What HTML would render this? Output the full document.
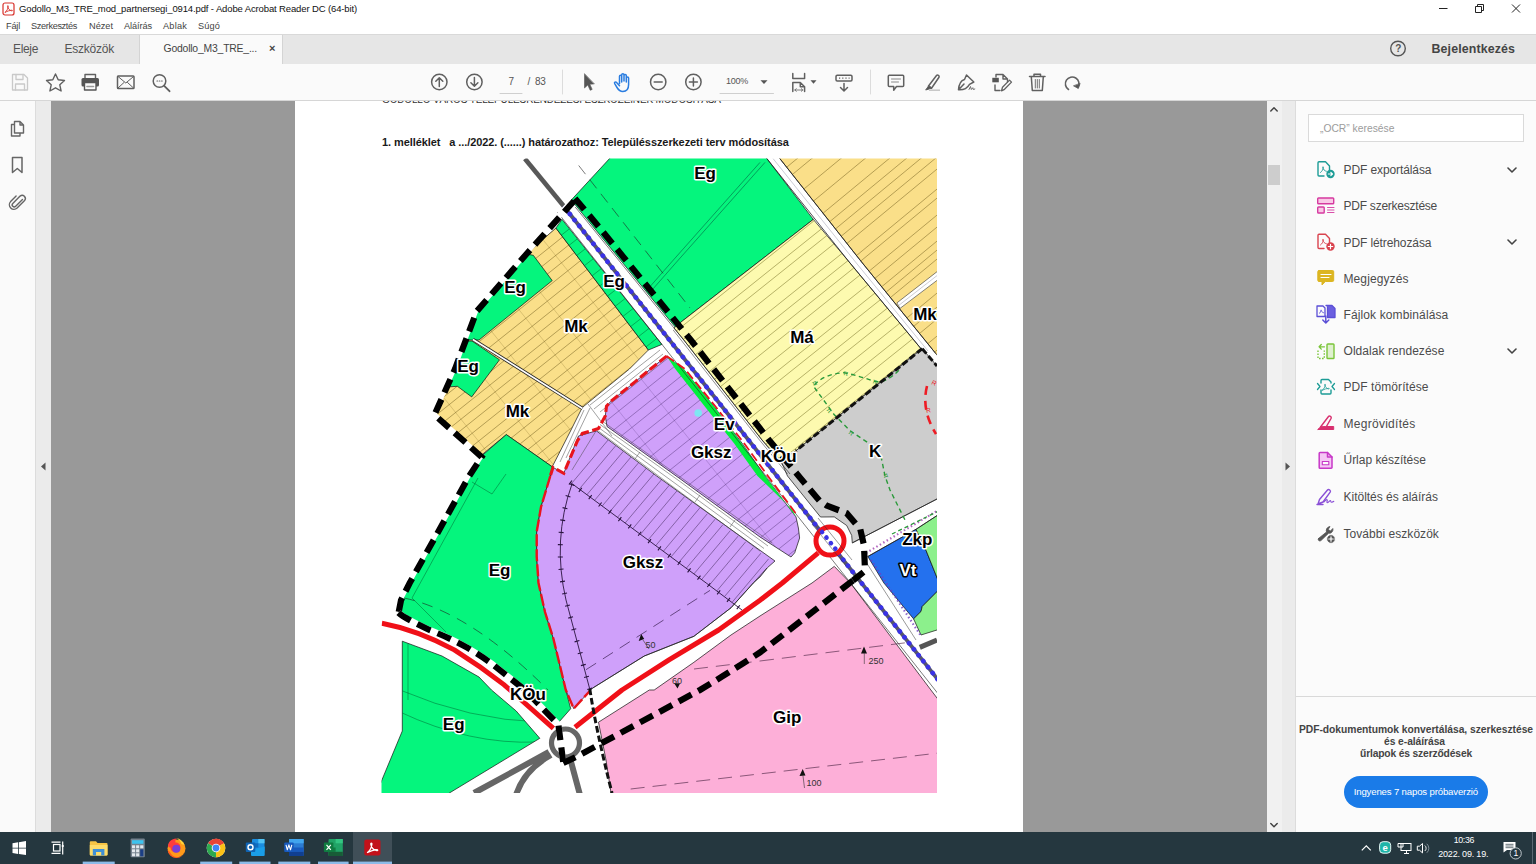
<!DOCTYPE html>
<html lang="hu">
<head>
<meta charset="utf-8">
<title>Godollo_M3_TRE_mod_partnersegi_0914.pdf - Adobe Acrobat Reader DC (64-bit)</title>
<style>
*{box-sizing:border-box;margin:0;padding:0}
html,body{width:1536px;height:864px;overflow:hidden;background:#fff;font-family:"Liberation Sans",sans-serif;color:#222}
.abs{position:absolute}
.t{position:absolute;white-space:nowrap;line-height:1}
#titlebar{left:0;top:0;width:1536px;height:19px;background:#fff}
#menubar{left:0;top:19px;width:1536px;height:15px;background:#fff}
#tabbar{left:0;top:34px;width:1536px;height:30px;background:#e6e6e6;border-top:1px solid #d9d9d9}
#tab{left:139px;top:35px;width:144px;height:29px;background:#fafafa;border-left:1px solid #d4d4d4;border-right:1px solid #d4d4d4}
#toolbar{left:0;top:64px;width:1536px;height:37px;background:#fafafa;border-bottom:1px solid #d6d6d6}
#rail{left:0;top:101px;width:35px;height:731px;background:#fafafa}
#railstrip{left:35px;top:101px;width:15.5px;height:731px;background:#ebebeb;border-left:1px solid #dcdcdc}
#docbg{left:50.5px;top:101px;width:1216.5px;height:731px;background:#999}
#page{left:295px;top:101px;width:728px;height:731px;background:#fff}
#vscroll{left:1267px;top:101px;width:14.5px;height:731px;background:#f1f1f1}
#vthumb{left:1268px;top:165px;width:12px;height:20px;background:#cdcdcd}
#rstrip{left:1281.5px;top:101px;width:14.5px;height:731px;background:#ebebeb;border-right:1px solid #dcdcdc}
#rpanel{left:1296px;top:101px;width:240px;height:731px;background:#fbfbfb}
#taskbar{left:0;top:832px;width:1536px;height:32px;background:#25373f}
.menu{font-size:9.2px;color:#444;top:22px}
.tool{font-size:12px;color:#4b4b4b}
.promo{font-size:10.3px;font-weight:bold;color:#444}
</style>
</head>
<body>
<div id="titlebar" class="abs"></div>
<div id="menubar" class="abs"></div>
<div id="tabbar" class="abs"></div>
<div id="tab" class="abs"></div>
<div id="toolbar" class="abs"></div>
<div id="rail" class="abs"></div>
<div id="railstrip" class="abs"></div>
<div id="docbg" class="abs"></div>
<div id="page" class="abs"></div>
<div id="vscroll" class="abs"></div>
<div id="vthumb" class="abs"></div>
<div id="rstrip" class="abs"></div>
<div id="rpanel" class="abs"></div>
<div id="taskbar" class="abs"></div>

<!-- TITLE + MENUS -->
<span class="t" id="title" style="letter-spacing:-0.128px;;;;left:19px;top:4px;font-size:9.5px;color:#111">Godollo_M3_TRE_mod_partnersegi_0914.pdf - Adobe Acrobat Reader DC (64-bit)</span>
<span class="t menu" id="m1" style="letter-spacing:-0.203px;;;;left:6px">Fájl</span>
<span class="t menu" id="m2" style="letter-spacing:-0.368px;;;;left:31px">Szerkesztés</span>
<span class="t menu" id="m3" style="letter-spacing:-0.003px;;;;left:89px">Nézet</span>
<span class="t menu" id="m4" style="letter-spacing:-0.087px;;;;left:124px">Aláírás</span>
<span class="t menu" id="m5" style="letter-spacing:0.203px;;;;left:163px">Ablak</span>
<span class="t menu" id="m6" style="letter-spacing:0.133px;;;;left:198px">Súgó</span>
<span class="t" id="tb1" style="letter-spacing:-0.338px;;;;left:13px;top:43px;font-size:12px;color:#555">Eleje</span>
<span class="t" id="tb2" style="letter-spacing:-0.232px;;;;left:64.5px;top:43px;font-size:12px;color:#555">Eszközök</span>
<span class="t" id="tb3" style="letter-spacing:-0.196px;;;;left:163.5px;top:44px;font-size:10.4px;color:#444">Godollo_M3_TRE_...</span>
<span class="t" id="tbx" style="left:269px;top:43px;font-size:11px;color:#444;font-weight:bold">×</span>
<span class="t" id="login" style="letter-spacing:0.118px;;;;left:1431.5px;top:43px;font-size:12.4px;color:#444;font-weight:bold">Bejelentkezés</span>

<!--CHROME-ICONS-START-->
<svg class="abs" style="left:0;top:0" width="1536" height="864" viewBox="0 0 1536 864" fill="none" stroke="#606060" stroke-width="1.5" stroke-linecap="round" stroke-linejoin="round">
<!-- app icon -->
<rect x="3" y="3" width="11" height="12" rx="2" fill="#fff" stroke="#d8302a" stroke-width="1.2"/>
<path d="M5.2 12.3c1.6-1.2 2.8-3.6 3.1-6 .1-.9-.9-.9-.8 0 .3 2.300 2.200 4.300 4.300 4.600.9.100.9-.8 0-.7-2.100.2-4.600 1-6.600 2.100z" stroke="#d8302a" stroke-width="0.9"/>
<!-- window controls -->
<g stroke="#222" stroke-width="1" stroke-linecap="butt">
<path d="M1439 8.500h8.500"/>
<path d="M1475.500 6.500h6v6h-6z M1477.500 6.500v-2h6v6h-2"/>
<path d="M1512 4.500l8 8 M1520 4.500l-8 8"/>
</g>
<!-- help -->
<circle cx="1398" cy="48.500" r="7.300" stroke="#555" stroke-width="1.400"/>
<!-- toolbar: save (disabled) -->
<g stroke="#c9c9c9" stroke-width="1.300">
<path d="M12.500 74.500h11.500l3.500 3.500v12h-15z"/><path d="M16 74.500v5h7v-5 M15.500 90v-6h9v6"/>
</g>
<!-- star -->
<path d="M55.500 74l2.700 5.800 6.300.7-4.700 4.300 1.300 6.200-5.600-3.200-5.600 3.200 1.300-6.200-4.700-4.300 6.300-.7z" stroke-width="1.400"/>
<!-- printer -->
<g>
<path d="M85 78v-3.500h10.500v3.500" stroke-width="1.400"/>
<rect x="81.500" y="78" width="17.500" height="8.500" rx="1.500" fill="#555" stroke="none"/>
<rect x="84.500" y="82.500" width="11.500" height="7.500" fill="#fafafa" stroke="#555" stroke-width="1.400"/>
<path d="M87 86.500h6.500" stroke="#999" stroke-width="1.600"/>
</g>
<!-- mail -->
<rect x="117.500" y="76" width="16.500" height="12.500" rx="0.800" stroke-width="1.500"/>
<path d="M118 76.500l7.800 6.500 7.800-6.500 M118 88l6-5.500 M133.500 88l-6-5.500" stroke-width="1"/>
<!-- search -->
<circle cx="159.500" cy="81" r="6.300" stroke-width="1.500"/><path d="M164.200 85.800l5.300 5.400" stroke-width="1.900"/>
<path d="M157 81h.6 M159.300 81h.6 M161.600 81h.6" stroke-width="1.200"/>
<!-- up/down -->
<circle cx="439.300" cy="82" r="7.700" stroke-width="1.500"/><path d="M439.300 86.500v-8.500 M435.800 81.200l3.500-3.500 3.500 3.500" stroke-width="1.500"/>
<circle cx="474.400" cy="82" r="7.700" stroke-width="1.500"/><path d="M474.400 77.500v8.500 M470.900 82.800l3.500 3.500 3.500-3.500" stroke-width="1.500"/>
<path d="M500 93.500h22" stroke="#cfcfcf" stroke-width="1"/>
<path d="M562.500 70v24 M870.500 70v24" stroke="#dcdcdc" stroke-width="1"/>
<!-- pointer -->
<path d="M584.500 74v14l3.300-3 2.400 5.300 2-.9-2.400-5.200 4.200-.3z" fill="#555" stroke="#555" stroke-width="0.600"/>
<!-- hand -->
<g stroke="#2b7de0" stroke-width="1.500">
<path d="M619.500 83.500v-7.200c0-1.500 2.200-1.500 2.200 0v5.700 M621.700 81v-6.200c0-1.500 2.300-1.500 2.300 0v6.200 M624 81v-5.500c0-1.500 2.300-1.500 2.300 0v6 M626.300 82v-4c0-1.500 2.300-1.500 2.300 0v6.500c0 4-2 7-5.800 7-3 0-4.300-1.500-5.800-4l-2.300-3.800c-.8-1.400.9-2.400 1.900-1.200l2.900 3.300"/>
</g>
<!-- zoom -/+ -->
<circle cx="658.200" cy="82" r="7.700"/><path d="M654.200 82h8"/>
<circle cx="693.400" cy="82" r="7.700"/><path d="M689.400 82h8 M693.400 78v8"/>
<path d="M720 93.500h53.500" stroke="#cfcfcf" stroke-width="1"/>
<path d="M760.500 80.300h7l-3.500 3.700z" fill="#555" stroke="none"/>
<!-- fit page -->
<path d="M792.800 73.500v5h11.800v-5 M792.800 91.500v-9h7.500l4.300 4.300v4.700 M800.300 82.500v4.300h4.300" stroke-width="1.500"/>
<path d="M794.800 90h8 M796.300 88.700l-1.500 1.300 1.500 1.300 M801.300 88.700l1.500 1.300-1.500 1.300" stroke-width="0.800"/>
<path d="M810.500 80.300h6l-3 3.500z" fill="#555" stroke="none"/>
<!-- scroll mode -->
<rect x="836" y="75.200" width="16" height="5.800" rx="1.200" stroke-width="1.500"/>
<path d="M839 78.100h1.200 M842.200 78.100h1.200 M845.400 78.100h1.200 M848.600 78.100h1" stroke-width="1.200" stroke-linecap="butt"/>
<path d="M844 83.500v7 M840.500 87.500l3.500 3.500 3.500-3.500" stroke-width="1.500"/>
<!-- comment -->
<path d="M889.300 75.200h13.400a1 1 0 0 1 1 1v9.300a1 1 0 0 1-1 1h-6.200l-2.800 3.700v-3.700h-4.400a1 1 0 0 1-1-1v-9.300a1 1 0 0 1 1-1z" stroke-width="1.500"/>
<path d="M891.500 79h9 M891.500 82h7" stroke-width="1" stroke="#888"/>
<!-- highlighter -->
<path d="M928.500 86l8-10.500c1-1.200 3.300.4 2.500 1.800l-7.500 10.900z" stroke-width="1.500"/>
<path d="M928.500 86l-2.800 4 5.800-1.800z" fill="#555" stroke-width="1"/>
<path d="M929 90.200h11" stroke="#c8c8c8" stroke-width="1.600" stroke-linecap="butt"/>
<!-- sign pen -->
<path d="M966.500 75l-2 4.500c-3.500 1-5.500 4-6 10.300 4 .3 8.500-1.200 11-5.500l4.300-2.300z M958.500 89.800l5.500-5.800" stroke-width="1.500"/>
<path d="M969 89.500l1.500-3 .8 3 1.500-1.800.5 1.800 1.500-.5" stroke-width="0.900"/>
<!-- edit doc -->
<path d="M996 77v-2.500h7l4.500 4.500v3 M1003 74.500v4.500h4.500 M995 85v5.500h5" stroke-width="1.400"/>
<rect x="992.300" y="77.800" width="6.500" height="4.500" fill="#555" stroke="none"/>
<path d="M1001.500 90.800l1-3.500 7-7.200 2 2-7 7.200z" stroke-width="1.300"/>
<!-- trash -->
<path d="M1029.500 76.500h15.500 M1034 76.300v-2h6.500v2 M1031.300 76.800l1 13.700h10l1-13.700" stroke-width="1.500"/>
<path d="M1035.300 79.500v8.500 M1037.300 79.500v8.500 M1039.300 79.500v8.500" stroke-width="0.900"/>
<!-- rotate -->
<path d="M1068.500 89.500a6.800 6.800 0 1 1 9.500-2.200" stroke-width="1.600"/>
<path d="M1073.800 86l4.500 2.500 1.700-4.800z" fill="#555" stroke-width="0.800"/>
<!-- left rail icons -->
<g stroke="#666" stroke-width="1.400">
<path d="M14.500 121.500h5.500l3.500 3.500v8h-9z M20 121.500v3.500h3.500 M14.500 124.500h-3v11.500h8.500v-3"/>
<path d="M12.500 157.500h9.500v15l-4.700-4-4.800 4z" stroke-width="1.500"/>
<path d="M22.500 199.500l-6.800 6.800a2 2 0 0 1-2.900-2.900l7.300-7.300a3.200 3.200 0 0 1 4.500 4.500l-7.500 7.500a4.600 4.600 0 0 1-6.500-6.500l5.500-5.500" stroke-width="1.400"/>
</g>
<!-- strip arrows -->
<path d="M45.500 462.500v8l-4.500-4z" fill="#555" stroke="none"/>
<path d="M1285.500 462.500v8l4.500-4z" fill="#555" stroke="none"/>
<!-- scroll arrows -->
<path d="M1270.800 111l3.200-3.200 3.200 3.200 M1270.800 823.500l3.200 3.200 3.200-3.200" stroke="#444" stroke-width="1.500"/>
</svg>
<span class="t" style="left:1395.300px;top:43.500px;font-size:10px;font-weight:bold;color:#555">?</span>
<span class="t" id="pg7" style="left:508.500px;top:77px;font-size:10px;color:#555">7</span>
<span class="t" id="pg83" style="letter-spacing:-0.294px;;;;left:527.5px;top:77px;font-size:10px;color:#555">/&nbsp; 83</span>
<span class="t" id="zoom" style="letter-spacing:-0.258px;;;;left:726px;top:77px;font-size:9px;color:#555">100%</span>
<!--CHROME-ICONS-END-->
<!--RPANEL-START-->
<div class="abs" style="left:1308px;top:113.5px;width:215.5px;height:28px;background:#fff;border:1px solid #dadada"></div>
<span class="t" id="ocr" style="left:1320px;top:124px;font-size:10.300px;color:#9c9c9c">„OCR” keresése</span>
<span class="t tool" id="r1" style="letter-spacing:-0.098px;;;;left:1343.5px;top:164px">PDF exportálása</span>
<span class="t tool" id="r2" style="letter-spacing:-0.241px;;;;left:1343.5px;top:200px">PDF szerkesztése</span>
<span class="t tool" id="r3" style="letter-spacing:-0.098px;;;;left:1343.5px;top:236.500px">PDF létrehozása</span>
<span class="t tool" id="r4" style="letter-spacing:0.097px;;;;left:1343.5px;top:272.500px">Megjegyzés</span>
<span class="t tool" id="r5" style="letter-spacing:0.121px;;;;left:1343.5px;top:308.500px">Fájlok kombinálása</span>
<span class="t tool" id="r6" style="letter-spacing:0.049px;;;;left:1343.5px;top:345px">Oldalak rendezése</span>
<span class="t tool" id="r7" style="letter-spacing:0.069px;;;;left:1343.5px;top:381px">PDF tömörítése</span>
<span class="t tool" id="r8" style="letter-spacing:0.275px;;;;left:1343.5px;top:417.500px">Megrövidítés</span>
<span class="t tool" id="r9" style="letter-spacing:-0.020px;;;;left:1343.5px;top:454px">Űrlap készítése</span>
<span class="t tool" id="r10" style="letter-spacing:-0.012px;;;;left:1343.5px;top:491px">Kitöltés és aláírás</span>
<span class="t tool" id="r11" style="letter-spacing:0.043px;;;;left:1343.5px;top:528px">További eszközök</span>
<div class="abs" style="left:1296px;top:696px;width:240px;height:1px;background:#d9d9d9"></div>
<span class="t promo" id="p1" style="letter-spacing:-0.041px;;;;left:1299px;top:725px">PDF-dokumentumok konvertálása, szerkesztése</span>
<span class="t promo" id="p2" style="letter-spacing:-0.065px;;;;left:1384px;top:737px">és e-aláírása</span>
<span class="t promo" id="p3" style="letter-spacing:-0.164px;;;;left:1360px;top:749px">űrlapok és szerződések</span>
<div class="abs" style="left:1344px;top:776px;width:144px;height:32px;border-radius:16px;background:#1a7be8"></div>
<span class="t" id="btn" style="letter-spacing:-0.152px;;;;left:1353.7px;top:787px;font-size:9.6px;color:#fff">Ingyenes 7 napos próbaverzió</span>
<svg class="abs" style="left:0;top:0" width="1536" height="864" viewBox="0 0 1536 864" fill="none" stroke-linecap="round" stroke-linejoin="round">
<!-- chevrons -->
<g stroke="#444" stroke-width="1.600"><path d="M1508 168l4 4 4-4 M1508 240l4 4 4-4 M1508 349l4 4 4-4"/></g>
<!-- export -->
<g stroke="#1c9c96" stroke-width="1.400">
<path d="M1329.500 171v-5l-4-4.200h-6.500a1 1 0 0 0-1 1v12.200a1 1 0 0 0 1 1h5"/>
<path d="M1320.500 172.500c1.500-1 2.700-3.200 2.900-5.200 0-.8-.8-.8-.7 0 .3 2 1.900 3.700 3.700 4" stroke-width="0.900"/>
<circle cx="1330.500" cy="174" r="4.200" fill="#1c9c96" stroke="none"/>
<path d="M1328.300 174h4 M1330.800 172.300l1.700 1.700-1.700 1.700" stroke="#fff" stroke-width="1.100"/>
</g>
<!-- edit -->
<g stroke="#d63aa0" stroke-width="1.400">
<rect x="1317.700" y="198" width="16" height="5.800" rx="0.800" fill="#f9c9e6"/>
<rect x="1317.700" y="207" width="6.500" height="6" rx="0.800" fill="#f9c9e6"/>
<path d="M1327.500 207.500h6.500 M1327.500 210h6.500 M1327.500 212.500h6.500" stroke-width="0.900"/>
</g>
<!-- create -->
<g stroke="#d9434e" stroke-width="1.400">
<path d="M1329.500 243.500v-5l-4-4.200h-6.500a1 1 0 0 0-1 1v12.200a1 1 0 0 0 1 1h5"/>
<path d="M1320.500 245c1.500-1 2.700-3.200 2.900-5.200 0-.8-.8-.8-.7 0 .3 2 1.900 3.700 3.700 4" stroke-width="0.900"/>
<circle cx="1330.500" cy="246.500" r="4.200" fill="#d9434e" stroke="none"/>
<path d="M1328.300 246.500h4.400 M1330.500 244.300v4.400" stroke="#fff" stroke-width="1.200"/>
</g>
<!-- comment -->
<path d="M1319 270.500h13.500a1.200 1.200 0 0 1 1.200 1.200v8.600a1.200 1.200 0 0 1-1.200 1.200h-7.200l-3.300 3.500v-3.500h-3a1.200 1.200 0 0 1-1.200-1.200v-8.600a1.200 1.200 0 0 1 1.200-1.200z" fill="#dcb622" stroke="#dcb622" stroke-width="1"/>
<path d="M1321 274.500h10 M1321 277.500h8" stroke="#fff" stroke-width="1.200"/>
<!-- combine -->
<g stroke="#5b4fd6" stroke-width="1.300">
<path d="M1317 306h6l2 2v8.500h-8z" fill="#fbfbfb"/>
<path d="M1326 305.500h6l3 3v9h-7.500v-10" fill="#6b5fe0"/>
<path d="M1319.300 313.500c.9-.7 1.600-2.200 1.800-3.600 .2 1.500 1.200 2.700 2.500 2.900" stroke-width="0.800"/>
<path d="M1325.800 316v6.500 M1322.800 320l3 3 3-3" stroke-width="1.500"/>
</g>
<!-- organize -->
<g stroke="#7bc53a" stroke-width="1.400">
<rect x="1327" y="344" width="7" height="14.500" rx="0.800" fill="#dff0cf"/>
<path d="M1318 350.500v8h6.300v-8" stroke-dasharray="1.600 1.400" stroke-linecap="butt"/>
<path d="M1324.500 346.800h-5 M1321.300 344.500l-2.200 2.300 2.200 2.300" stroke-width="1.300"/>
</g>
<!-- compress -->
<g stroke="#1c9c96" stroke-width="1.400">
<path d="M1321 383v-2.500a1 1 0 0 1 1-1h6.500l2.500 2.500v1 M1321 390v3a1 1 0 0 0 1 1h8a1 1 0 0 0 1-1v-3"/>
<path d="M1317.500 383.500l2.500 3-2.500 3 M1334.500 383.500l-2.500 3 2.500 3" stroke-width="1.300"/>
<path d="M1322.300 390.200c1.500-1 2.800-3.300 3.100-5.500 0-.8-.8-.8-.7 0 .3 2.200 2 4 4 4.300 .8 0 .8-.7 0-.7-2 .2-4.500 .9-6.400 1.900z" stroke-width="0.800"/>
</g>
<!-- redact -->
<g stroke="#d8306f" stroke-width="1.400">
<path d="M1320.500 427l8-10.500c1-1.300 3.400.3 2.600 1.800l-5 8.700"/>
<path d="M1320.500 427l-2.800 2.500h16v-3h-8z" fill="#d8306f" stroke-width="1"/>
</g>
<!-- form -->
<g stroke="#c738c8" stroke-width="1.500">
<path d="M1320 452.500h7.500l4.500 4.500v10.500a.8.800 0 0 1-.8.800h-11.200a.8.800 0 0 1-.8-.8v-14.200a.8.800 0 0 1 .8-.8z" fill="#f5c6f5"/>
<path d="M1327.500 452.500v4.500h4.500"/>
<rect x="1322.300" y="461.500" width="6.500" height="3.300" fill="#fbfbfb" stroke-width="1.100"/>
</g>
<!-- fill sign -->
<g stroke="#8a4fd6" stroke-width="1.400">
<path d="M1318 504l1.500-4.500 8-9.500c1.200-1.400 3.800.6 2.700 2.200l-7.200 9.800z M1317 504.500h6"/>
<path d="M1324 502c2-2.500 3.300-3 3.300-1.800 0 1-1 2.500.2 2.500 1.200 0 2-2.200 2.800-2.200.8 0 .2 1.800 1.200 1.800 .8 0 1.200-.8 2.300-.9" stroke-width="1.100"/>
</g>
<!-- more tools -->
<g stroke="#555" stroke-width="1.400">
<path d="M1318.500 538.500l8-6.500c-.8-2.500.5-5 3.500-5.500l-1.800 3 2.300 1.500 2.300-2.500c.8 2.800-1.700 5.300-4.200 4.700l-7.600 7.300c-1.500 1.400-3.900-.7-2.500-2z" fill="#555" stroke-width="0.800"/>
<circle cx="1331" cy="539" r="4.300" fill="#555" stroke="#fbfbfb" stroke-width="1"/>
<path d="M1328.800 539h4.400 M1331 536.800v4.400" stroke="#fff" stroke-width="1.200"/>
</g>
</svg>
<!--RPANEL-END-->
<!--MAP-START-->
<svg class="abs" style="left:0;top:0" width="1536" height="864" viewBox="0 0 1536 864" font-family="'Liberation Sans',sans-serif">
<defs><clipPath id="mapclip"><rect x="381.500" y="158.500" width="555.500" height="634.500"/></clipPath>
<clipPath id="c_mkl"><polygon points="555.9,228.0 648.4,350.0 629.4,369.0 582.4,407.4 581.0,410.0 570.0,432.0 552.2,466.8 506.3,434.6 481.6,455.0 481.6,457.0 434.5,414.8 455.0,369.0 476.6,311.5 526.5,254.0"/></clipPath>
<clipPath id="c_gstrip"><polygon points="562.0,219.4 661.9,344.4 648.4,350.0 555.9,228.0"/></clipPath>
<clipPath id="c_eg1"><polygon points="533.3,255.3 552.2,280.6 479.0,340.0 466.0,340.0 476.6,311.5 526.5,254.0"/></clipPath>
<clipPath id="c_eg2"><polygon points="466.0,341.0 472.0,341.0 499.5,359.8 471.7,396.9 457.4,386.3 447.0,387.0 455.0,369.0"/></clipPath>
<clipPath id="c_eg3"><polygon points="481.6,456.0 506.3,434.6 552.2,466.8 550.3,476.0 541.0,507.0 536.7,531.7 536.7,556.5 538.5,583.0 545.0,612.0 553.4,638.7 565.8,690.0 570.7,708.7 559.0,722.0 525.0,690.0 516.2,682.0 491.5,663.5 466.7,647.4 429.5,630.0 398.6,612.7 401.0,600.3 409.7,583.0 469.2,476.0"/></clipPath>
<clipPath id="c_eg4"><polygon points="402.3,641.2 442.0,656.0 479.0,677.0 491.5,690.0 516.2,711.0 539.8,738.3 441.1,798.0 374.4,798.0 402.3,731.0"/></clipPath>
<clipPath id="c_egbig"><polygon points="614.2,153.5 763.0,153.5 813.3,219.4 680.2,322.7 676.0,328.0 571.3,200.0"/></clipPath>
<clipPath id="c_ma"><polygon points="813.3,219.4 849.2,262.0 921.0,348.7 796.0,450.7 781.0,461.0 762.0,440.0 683.8,340.0 674.0,328.0 680.2,322.7"/></clipPath>
<clipPath id="c_mkr"><polygon points="775.8,153.5 942.1,153.5 942.0,360.9 935.9,353.7 898.7,307.8 861.6,262.0"/></clipPath>
<clipPath id="c_k"><polygon points="922.2,348.7 942.0,371.8 942.0,496.4 852.3,542.9 851.7,535.4 846.7,525.5 834.3,516.9 820.5,517.0 787.5,476.0 781.0,461.0 796.0,450.7"/></clipPath>
<clipPath id="c_gk1"><polygon points="666.6,356.1 683.4,369.0 713.6,406.0 741.9,443.0 764.9,476.0 796.0,516.9 798.4,528.0 799.6,538.0 794.7,552.8 791.0,557.0 760.0,537.0 679.0,478.0 607.0,426.5 605.3,416.0 606.5,406.2 610.9,401.2 635.6,381.4 650.5,369.0"/></clipPath>
<clipPath id="c_ev"><polygon points="666.6,356.1 683.4,369.0 713.6,406.0 741.4,443.0 764.9,476.0 796.0,516.9 792.5,510.0 757.5,476.0 734.0,443.3 704.4,406.0 675.3,369.0"/></clipPath>
<clipPath id="c_gk2"><polygon points="596.6,431.0 656.7,476.0 760.0,550.3 775.0,561.0 767.4,567.7 760.0,577.0 753.3,583.0 731.0,607.8 693.9,636.3 644.3,656.0 592.3,688.3 573.7,708.6 565.8,690.0 553.4,638.7 545.0,612.0 538.5,583.0 536.7,556.5 536.7,531.7 541.0,507.0 550.3,476.0 553.0,467.4 563.8,473.3 574.6,445.7 578.5,436.0 592.3,432.0"/></clipPath>
<clipPath id="c_gip"><polygon points="834.3,566.4 850.4,583.0 930.9,690.0 942.0,704.6 942.3,798.0 611.8,798.0 606.0,760.0 598.5,722.2 649.3,690.0 654.2,690.0 693.9,662.3 731.0,635.0 760.0,616.0 812.0,583.0"/></clipPath>
<clipPath id="c_vt"><polygon points="867.8,556.5 916.0,529.3 926.0,550.3 942.0,590.0 942.0,586.7 922.2,606.5 921.0,611.5 913.6,618.9 883.9,583.0"/></clipPath>
<clipPath id="c_zkp1"><polygon points="916.0,529.3 942.0,512.3 942.0,590.0 926.0,550.3"/></clipPath>
<clipPath id="c_zkp2"><polygon points="942.0,586.7 922.2,606.5 921.0,611.5 913.6,618.9 921.0,635.0 942.0,628.4"/></clipPath>
</defs>
<g clip-path="url(#mapclip)">
<rect x="381" y="158" width="557" height="636" fill="#fff"/>
<polygon points="555.9,228.0 648.4,350.0 629.4,369.0 582.4,407.4 581.0,410.0 570.0,432.0 552.2,466.8 506.3,434.6 481.6,455.0 481.6,457.0 434.5,414.8 455.0,369.0 476.6,311.5 526.5,254.0" fill="#fadf89" stroke="#111" stroke-width="0.7" stroke-linejoin="round"/>
<path clip-path="url(#c_mkl)" d="M420.0 311.0L680.0 103.0M420.0 325.0L680.0 117.0M420.0 337.0L680.0 129.0M420.0 351.0L680.0 143.0M420.0 364.0L680.0 156.0M420.0 376.0L680.0 168.0M420.0 389.0L680.0 181.0M420.0 403.0L680.0 195.0M420.0 416.0L680.0 208.0M420.0 428.0L680.0 220.0M420.0 441.0L680.0 233.0M420.0 452.0L680.0 244.0M420.0 463.0L680.0 255.0M420.0 475.0L680.0 267.0M420.0 488.0L680.0 280.0M420.0 500.0L680.0 292.0M420.0 511.0L680.0 303.0M420.0 524.0L680.0 316.0M420.0 536.0L680.0 328.0M420.0 549.0L680.0 341.0M420.0 563.0L680.0 355.0M420.0 574.0L680.0 366.0M420.0 585.0L680.0 377.0M420.0 598.0L680.0 390.0M420.0 609.0L680.0 401.0M420.0 622.0L680.0 414.0M420.0 635.0L680.0 427.0M420.0 646.0L680.0 438.0M420.0 659.0L680.0 451.0M420.0 672.0L680.0 464.0M420.0 685.0L680.0 477.0M420.0 697.0L680.0 489.0M420.0 711.0L680.0 503.0M420.0 722.0L680.0 514.0" fill="none" stroke="#6a5618" stroke-width="0.6" opacity="0.8"/>
<path clip-path="url(#c_mkl)" d="M420.0 -84.0L680.0 241.0M420.0 -14.0L680.0 311.0M420.0 30.0L680.0 355.0M420.0 86.0L680.0 411.0M420.0 142.0L680.0 467.0M420.0 186.0L680.0 511.0M420.0 242.0L680.0 567.0M420.0 298.0L680.0 623.0M420.0 368.0L680.0 693.0" fill="none" stroke="#6a5618" stroke-width="0.5" opacity="0.45"/>
<polygon points="562.0,219.4 661.9,344.4 648.4,350.0 555.9,228.0" fill="#05f57d" stroke="#111" stroke-width="0.7" stroke-linejoin="round"/>
<polygon points="533.3,255.3 552.2,280.6 479.0,340.0 466.0,340.0 476.6,311.5 526.5,254.0" fill="#05f57d" stroke="#111" stroke-width="0.7" stroke-linejoin="round"/>
<polygon points="466.0,341.0 472.0,341.0 499.5,359.8 471.7,396.9 457.4,386.3 447.0,387.0 455.0,369.0" fill="#05f57d" stroke="#111" stroke-width="0.7" stroke-linejoin="round"/>
<polygon points="481.6,456.0 506.3,434.6 552.2,466.8 550.3,476.0 541.0,507.0 536.7,531.7 536.7,556.5 538.5,583.0 545.0,612.0 553.4,638.7 565.8,690.0 570.7,708.7 559.0,722.0 525.0,690.0 516.2,682.0 491.5,663.5 466.7,647.4 429.5,630.0 398.6,612.7 401.0,600.3 409.7,583.0 469.2,476.0" fill="#05f57d" stroke="#111" stroke-width="0.7" stroke-linejoin="round"/>
<polygon points="402.3,641.2 442.0,656.0 479.0,677.0 491.5,690.0 516.2,711.0 539.8,738.3 441.1,798.0 374.4,798.0 402.3,731.0" fill="#05f57d" stroke="#111" stroke-width="0.7" stroke-linejoin="round"/>
<polygon points="614.2,153.5 763.0,153.5 813.3,219.4 680.2,322.7 676.0,328.0 571.3,200.0" fill="#05f57d" stroke="#111" stroke-width="0.7" stroke-linejoin="round"/>
<polygon points="813.3,219.4 849.2,262.0 921.0,348.7 796.0,450.7 781.0,461.0 762.0,440.0 683.8,340.0 674.0,328.0 680.2,322.7" fill="#fdfaaf" stroke="#111" stroke-width="0.7" stroke-linejoin="round"/>
<path clip-path="url(#c_ma)" d="M660.0 344.0L940.0 120.0M660.0 358.0L940.0 134.0M660.0 369.0L940.0 145.0M660.0 383.0L940.0 159.0M660.0 399.0L940.0 175.0M660.0 411.0L940.0 187.0M660.0 423.0L940.0 199.0M660.0 435.0L940.0 211.0M660.0 451.0L940.0 227.0M660.0 465.0L940.0 241.0M660.0 476.0L940.0 252.0M660.0 490.0L940.0 266.0M660.0 501.0L940.0 277.0M660.0 515.0L940.0 291.0M660.0 529.0L940.0 305.0M660.0 541.0L940.0 317.0M660.0 557.0L940.0 333.0M660.0 573.0L940.0 349.0M660.0 587.0L940.0 363.0M660.0 603.0L940.0 379.0M660.0 619.0L940.0 395.0M660.0 631.0L940.0 407.0M660.0 643.0L940.0 419.0M660.0 657.0L940.0 433.0M660.0 671.0L940.0 447.0M660.0 682.0L940.0 458.0M660.0 693.0L940.0 469.0M660.0 704.0L940.0 480.0M660.0 720.0L940.0 496.0M660.0 734.0L940.0 510.0M660.0 750.0L940.0 526.0M660.0 764.0L940.0 540.0M660.0 776.0L940.0 552.0M660.0 788.0L940.0 564.0" fill="none" stroke="#6a6418" stroke-width="0.6" opacity="0.8"/>
<polygon points="775.8,153.5 942.1,153.5 942.0,360.9 935.9,353.7 898.7,307.8 861.6,262.0" fill="#fadf89" stroke="#111" stroke-width="0.7" stroke-linejoin="round"/>
<path clip-path="url(#c_mkr)" d="M770.0 164.0L940.0 23.6M770.0 181.0L940.0 40.6M770.0 193.0L940.0 52.6M770.0 217.0L940.0 76.6M770.0 237.0L940.0 96.6M770.0 257.0L940.0 116.6M770.0 271.0L940.0 130.6M770.0 283.0L940.0 142.6M770.0 295.0L940.0 154.6M770.0 307.0L940.0 166.6M770.0 327.0L940.0 186.6M770.0 336.0L940.0 195.6M770.0 353.0L940.0 212.6M770.0 365.0L940.0 224.6M770.0 379.0L940.0 238.6M770.0 388.0L940.0 247.6M770.0 397.0L940.0 256.6M770.0 414.0L940.0 273.6M770.0 431.0L940.0 290.6M770.0 445.0L940.0 304.6M770.0 457.0L940.0 316.6M770.0 474.0L940.0 333.6M770.0 488.0L940.0 347.6M770.0 500.0L940.0 359.6M770.0 524.0L940.0 383.6M770.0 541.0L940.0 400.6M770.0 558.0L940.0 417.6M770.0 572.0L940.0 431.6M770.0 586.0L940.0 445.6M770.0 603.0L940.0 462.6" fill="none" stroke="#6a5618" stroke-width="0.6" opacity="0.8"/>
<polygon points="922.2,348.7 942.0,371.8 942.0,496.4 852.3,542.9 851.7,535.4 846.7,525.5 834.3,516.9 820.5,517.0 787.5,476.0 781.0,461.0 796.0,450.7" fill="#cdcdcd" stroke="#111" stroke-width="0.7" stroke-linejoin="round"/>
<polygon points="666.6,356.1 683.4,369.0 713.6,406.0 741.9,443.0 764.9,476.0 796.0,516.9 798.4,528.0 799.6,538.0 794.7,552.8 791.0,557.0 760.0,537.0 679.0,478.0 607.0,426.5 605.3,416.0 606.5,406.2 610.9,401.2 635.6,381.4 650.5,369.0" fill="#cfa0fa" stroke="#111" stroke-width="0.7" stroke-linejoin="round"/>
<path clip-path="url(#c_gk1)" d="M590.0 434.0L810.0 258.0M590.0 449.0L810.0 273.0M590.0 461.0L810.0 285.0M590.0 476.0L810.0 300.0M590.0 488.0L810.0 312.0M590.0 505.0L810.0 329.0M590.0 519.0L810.0 343.0M590.0 534.0L810.0 358.0M590.0 549.0L810.0 373.0M590.0 564.0L810.0 388.0M590.0 576.0L810.0 400.0M590.0 593.0L810.0 417.0M590.0 607.0L810.0 431.0M590.0 624.0L810.0 448.0M590.0 638.0L810.0 462.0M590.0 650.0L810.0 474.0M590.0 662.0L810.0 486.0M590.0 674.0L810.0 498.0M590.0 686.0L810.0 510.0M590.0 700.0L810.0 524.0M590.0 714.0L810.0 538.0M590.0 726.0L810.0 550.0M590.0 743.0L810.0 567.0M590.0 757.0L810.0 581.0" fill="none" stroke="#3a2060" stroke-width="0.6" opacity="0.65"/>
<path clip-path="url(#c_gk1)" d="M590.0 255.0L810.0 530.0M590.0 315.0L810.0 590.0M590.0 375.0L810.0 650.0M590.0 450.0L810.0 725.0M590.0 525.0L810.0 800.0" fill="none" stroke="#3a2060" stroke-width="0.5" opacity="0.4"/>
<polygon points="596.6,431.0 656.7,476.0 760.0,550.3 775.0,561.0 767.4,567.7 760.0,577.0 753.3,583.0 731.0,607.8 693.9,636.3 644.3,656.0 592.3,688.3 573.7,708.6 565.8,690.0 553.4,638.7 545.0,612.0 538.5,583.0 536.7,556.5 536.7,531.7 541.0,507.0 550.3,476.0 553.0,467.4 563.8,473.3 574.6,445.7 578.5,436.0 592.3,432.0" fill="#cfa0fa" stroke="#111" stroke-width="0.7" stroke-linejoin="round"/>
<polygon points="834.3,566.4 850.4,583.0 930.9,690.0 942.0,704.6 942.3,798.0 611.8,798.0 606.0,760.0 598.5,722.2 649.3,690.0 654.2,690.0 693.9,662.3 731.0,635.0 760.0,616.0 812.0,583.0" fill="#fdafd8" stroke="#111" stroke-width="0.7" stroke-linejoin="round"/>
<polygon points="867.8,556.5 916.0,529.3 926.0,550.3 942.0,590.0 942.0,586.7 922.2,606.5 921.0,611.5 913.6,618.9 883.9,583.0" fill="#2471ee" stroke="#111" stroke-width="0.7" stroke-linejoin="round"/>
<polygon points="916.0,529.3 942.0,512.3 942.0,590.0 926.0,550.3" fill="#8cf08c" stroke="#111" stroke-width="0.7" stroke-linejoin="round"/>
<polygon points="942.0,586.7 922.2,606.5 921.0,611.5 913.6,618.9 921.0,635.0 942.0,628.4" fill="#8cf08c" stroke="#111" stroke-width="0.7" stroke-linejoin="round"/>
<polygon points="666.6,356.1 683.4,369.0 713.6,406.0 741.4,443.0 764.9,476.0 796.0,516.9 792.5,510.0 757.5,476.0 734.0,443.3 704.4,406.0 675.3,369.0" fill="#00f03c"/>
<clipPath id="c_gk2b"><polygon points="570,482.200 706.200,583 760,622 770,560 656.700,476 596,431 560,440"/></clipPath>
<g clip-path="url(#c_gk2)"><path clip-path="url(#c_gk2b)" d="M440.0 640.0L608.1 440.0M452.4 640.0L620.5 440.0M464.8 640.0L632.9 440.0M477.2 640.0L645.3 440.0M489.6 640.0L657.7 440.0M502.0 640.0L670.1 440.0M514.4 640.0L682.5 440.0M526.8 640.0L694.9 440.0M539.2 640.0L707.3 440.0M551.6 640.0L719.7 440.0M564.0 640.0L732.1 440.0M576.4 640.0L744.5 440.0M588.8 640.0L756.9 440.0M601.2 640.0L769.3 440.0M613.6 640.0L781.7 440.0M626.0 640.0L794.1 440.0M638.4 640.0L806.5 440.0M650.8 640.0L818.9 440.0M663.2 640.0L831.3 440.0M675.6 640.0L843.7 440.0M688.0 640.0L856.1 440.0M700.4 640.0L868.5 440.0M712.8 640.0L880.9 440.0M725.2 640.0L893.3 440.0M737.6 640.0L905.7 440.0M750.0 640.0L918.1 440.0M762.4 640.0L930.5 440.0M774.8 640.0L942.9 440.0M787.2 640.0L955.3 440.0M799.6 640.0L967.7 440.0M812.0 640.0L980.1 440.0M824.4 640.0L992.5 440.0" fill="none" stroke="#2a1440" stroke-width="0.6" opacity="0.75"/></g>
<path clip-path="url(#c_egbig)" d="M760 162.400L671.600 262L640 298 M765 162.400L676.600 262L645 298" fill="none" stroke="#064" stroke-width="0.6"/>
<path d="M578.700 165.500L654.200 262L690 308" fill="none" stroke="#222" stroke-width="0.6" stroke-dasharray="11 7"/>
<path clip-path="url(#c_gstrip)" d="M555.1 240.0l18 -14M563.0 250.0l18 -14M570.9 260.0l18 -14M578.8 270.0l18 -14M586.7 280.0l18 -14M594.6 290.0l18 -14M602.5 300.0l18 -14M610.4 310.0l18 -14M618.3 320.0l18 -14M626.2 330.0l18 -14M634.1 340.0l18 -14M642.0 350.0l18 -14" fill="none" stroke="#063" stroke-width="0.5"/>
<path clip-path="url(#c_eg3)" d="M478 478L412 598L446 632 M472 482L492 494L506 474" fill="none" stroke="#063" stroke-width="0.5"/>
<path clip-path="url(#c_eg3)" d="M404 598Q470 612 548 690" fill="none" stroke="#222" stroke-width="0.6" stroke-dasharray="11 8"/>
<path clip-path="url(#c_eg4)" d="M400 690Q470 720 540 722 M400 712Q470 745 538 742 M408 640L408 700" fill="none" stroke="#063" stroke-width="0.5"/>
<circle cx="698.200" cy="413" r="3.800" fill="#7fe6f2"/>
<polygon points="896.9,302.9 937.5,271.3 937.5,280.0 900.0,308.4" fill="#fff" stroke="#333" stroke-width="0.6"/>
<path d="M898.500 305.600L937 275.600" stroke="#99a" stroke-width="0.5"/>
<path d="M766.800 158.500L849.200 262L921 348.700 M779.800 158.500L861.600 262L935.900 353.700" fill="none" stroke="#222" stroke-width="0.8"/>
<path d="M773 158.500L855.500 262L928 351" fill="none" stroke="#99a" stroke-width="0.5"/>
<path d="M472.900 339.400L582.500 408.400" stroke="#222" stroke-width="3.200"/><path d="M472.900 339.400L582.500 408.400" stroke="#fff" stroke-width="1.800"/>
<path d="M660 350L590 405 M663 354L594 409 M668 358L600 412 M588 404L612 436 M602 421L683 479L772 543 M600 424.500L680 481.500L768 546 M598.500 427.500L676 484L764 548.500 M597 430L672 486L760 551 M596 431L572 470 M584 410L560 462 M590 408L566 458 M640 452l-5 7 M700 495l-5 7 M735 520l-5 7" fill="none" stroke="#444" stroke-width="0.5"/>
<path d="M557.3 212L943.0 700" stroke="#222" stroke-width="0.6" fill="none"/>
<path d="M575.2 207L683.8 340L762.0 440L790.0 474" stroke="#222" stroke-width="0.6" fill="none"/>
<path d="M673.2 330L759.5 440L787.5 474" stroke="#222" stroke-width="0.5" fill="none"/>
<path d="M524.900 158.700L564.500 207" stroke="#585858" stroke-width="4.600"/>
<path d="M563.5 206L954.0 700" stroke="#55556e" stroke-width="3.800"/>
<path d="M565.1 208L954.0 700" stroke="#3a32e6" stroke-width="4.800" stroke-linecap="round" stroke-dasharray="0.1 7.500"/>
<path d="M666.600 356.100L684.9 369L715.1 406L743.9 443L767.9 476L797 515" fill="none" stroke="#e8141c" stroke-width="1.800" stroke-dasharray="9 4"/>
<path d="M666.600 356.100L650.500 369L635.600 381.400L610.900 401.200L606.500 406.200L605.300 416L598.500 428.500L582.400 433.400L577.400 440.800L563.800 473.300L553 467.400L550.300 476" fill="none" stroke="#e8141c" stroke-width="3.100" stroke-dasharray="9 3.500"/>
<path d="M550.300 476L541 507L536.700 531.700L536.700 556.500L538.500 583L545 612L553.400 638.700L565.800 690L573.700 708.600L589.800 691" fill="none" stroke="#e8141c" stroke-width="2.400" stroke-dasharray="12 3"/>
<path d="M570 482.200L706.200 583L742 610" fill="none" stroke="#2a1440" stroke-width="0.900"/>
<path d="M570 482.200L706.200 583L742 610" fill="none" stroke="#2a1440" stroke-width="5" stroke-dasharray="1.100 11.200"/>
<path d="M572 484Q552 540 566 600L590 690" fill="none" stroke="#2a1440" stroke-width="0.900"/>
<path d="M572 484Q552 540 566 600L590 690" fill="none" stroke="#2a1440" stroke-width="5" stroke-dasharray="1.100 11.200"/>
<path d="M586 669.700L710 590.400" stroke="#3a2050" stroke-width="0.700" stroke-dasharray="12 8"/>
<path d="M760 661L908.600 642.400 M694 669L760 661" stroke="#5a3050" stroke-width="0.700" stroke-dasharray="14 8"/>
<path d="M630.700 789L937 753.200" stroke="#5a3050" stroke-width="0.700" stroke-dasharray="14 8"/>
<path d="M641.200 634l-2.500 7 5.500-2z M864 646.500l-3 7h6z M802.700 769l-3.200 7 6-.5z M674 683l6 .5-2.500 5z" fill="#111"/>
<path d="M643 640l6 9 M864.300 653v11 M803 776l1.500 12" stroke="#333" stroke-width="0.600"/>
<path d="M852.300 542.900L937 499 M867.800 556.500L916 529.300L937 515.600" fill="none" stroke="#222" stroke-width="0.700"/>
<path d="M866 553L937 511" stroke="#a040b0" stroke-width="2.200" stroke-dasharray="1.500 2.500" opacity="0.8"/>
<path d="M870 553L937 520" stroke="#2a9a3a" stroke-width="1.300" stroke-dasharray="4 3" transform="translate(22,-19)"/>
<path d="M871 560L921 636" stroke="#7040c0" stroke-width="2.200" stroke-dasharray="1.500 2.500" opacity="0.8"/>
<path d="M866 562L916 640" stroke="#333" stroke-width="0.500"/>
<path d="M919.800 647.400L937 640" stroke="#555" stroke-width="5"/>
<path d="M814.500 385Q824 374 844.200 372.700Q860 376 874 381.400Q886 384 900 369 M814.500 387.600L834.300 414.800L850.400 431L869 443.300L881.400 458.200L885 476L890 490L905 520" fill="none" stroke="#2a9a3a" stroke-width="1.400" stroke-dasharray="4.500 3.500"/>
<path d="M927 386Q921 410 936 434" fill="none" stroke="#ee1c24" stroke-width="2.600" stroke-dasharray="9 6"/>
<path d="M922.200 348.700L796 450.700 M922.200 348.700L937 366" fill="none" stroke="#111" stroke-width="3" stroke-dasharray="6.500 3"/>
<path d="M818.200 552.800L782.300 583L760 600.300L718.600 630L669 659.800L622 690L575 727.200" fill="none" stroke="#f01018" stroke-width="5" stroke-linejoin="round"/>
<path d="M381.900 623.300Q417.200 630 454.300 649.900Q480 666 503.900 684.600L510 690L553.400 728.400" fill="none" stroke="#f01018" stroke-width="5"/>
<path d="M592.300 688.300L644.300 656L693.900 636.300L731 607.800L753.300 583L767 568" fill="none" stroke="#222" stroke-width="0.700"/>
<circle cx="830" cy="541" r="14" fill="#fff" stroke="#f01018" stroke-width="5"/>
<path d="M822 532L838 552" stroke="#3a32e6" stroke-width="4.600" stroke-linecap="round" stroke-dasharray="0.100 7"/>
<path d="M812 524L846 566 M818 518L852 560" stroke="#333" stroke-width="0.500"/>
<path d="M549 752L474 793 M551 755Q524 770 516 795 M570 758L580 795" fill="none" stroke="#666" stroke-width="6"/>
<circle cx="565.500" cy="743" r="14" fill="none" stroke="#666" stroke-width="5.200"/>
<path d="M589.800 689Q596 730 612 793" fill="none" stroke="#111" stroke-width="3" stroke-dasharray="6.500 3"/>
<polyline points="572.5,200.5 525.0,253.5 475.1,311.0 453.5,368.5 433.0,414.3 480.1,456.5 467.7,475.5 408.2,582.5 399.5,599.8 397.1,612.2" fill="none" stroke="#fff" stroke-width="6.200" stroke-linejoin="round"/>
<polyline points="574.0,201.0 526.5,254.0 476.6,311.5 455.0,369.0 434.5,414.8 481.6,457.0 469.2,476.0 409.7,583.0 401.0,600.3 398.6,612.7" fill="none" stroke="#000" stroke-width="6.200" stroke-dasharray="14.500 7.500" stroke-linejoin="miter"/>
<path d="M398.600 612.700Q404 618 429.500 630Q450 638 466.700 647.400Q480 655 491.500 663.500L525 690L558.400 724.700L563.300 763" fill="none" stroke="#fff" stroke-width="6.200"/>
<path d="M398.600 612.700Q404 618 429.500 630Q450 638 466.700 647.400Q480 655 491.500 663.500L525 690L558.400 724.700L563.300 763" fill="none" stroke="#000" stroke-width="6.200" stroke-dasharray="14.500 7.500"/>
<polyline points="575.0,198.5 594.8,221.9 690.8,340.0 769.0,440.0 797.0,474.0 819.5,500.8 826.9,505.7 846.7,513.2 860.3,529.3 864.0,545.4 865.0,571.0 853.0,580.5" fill="none" stroke="#000" stroke-width="6.200" stroke-dasharray="14.500 7.500" stroke-linejoin="round"/>
<path d="M853 580.500L848 584.200Q800 622 760 652.400Q730 672 700 690L576.200 756.900L563.300 763" fill="none" stroke="#000" stroke-width="6.200" stroke-dasharray="14.500 7.500"/>
<text x="705.0" y="179.2" font-size="17" font-weight="bold" text-anchor="middle" fill="#000" stroke="#fff" stroke-width="3" stroke-linejoin="round" paint-order="stroke">Eg</text>
<text x="515.0" y="293.0" font-size="17" font-weight="bold" text-anchor="middle" fill="#000" stroke="#fff" stroke-width="3" stroke-linejoin="round" paint-order="stroke">Eg</text>
<text x="614.0" y="286.8" font-size="17" font-weight="bold" text-anchor="middle" fill="#000" stroke="#fff" stroke-width="3" stroke-linejoin="round" paint-order="stroke">Eg</text>
<text x="468.0" y="372.4" font-size="17" font-weight="bold" text-anchor="middle" fill="#000" stroke="#fff" stroke-width="3" stroke-linejoin="round" paint-order="stroke">Eg</text>
<text x="576.0" y="332.1" font-size="17" font-weight="bold" text-anchor="middle" fill="#000" stroke="#fff" stroke-width="3" stroke-linejoin="round" paint-order="stroke">Mk</text>
<text x="517.5" y="416.6" font-size="17" font-weight="bold" text-anchor="middle" fill="#000" stroke="#fff" stroke-width="3" stroke-linejoin="round" paint-order="stroke">Mk</text>
<text x="802.0" y="343.1" font-size="17" font-weight="bold" text-anchor="middle" fill="#000" stroke="#fff" stroke-width="3" stroke-linejoin="round" paint-order="stroke">Má</text>
<text x="925.0" y="320.1" font-size="17" font-weight="bold" text-anchor="middle" fill="#000" stroke="#fff" stroke-width="3" stroke-linejoin="round" paint-order="stroke">Mk</text>
<text x="724.2" y="429.6" font-size="17" font-weight="bold" text-anchor="middle" fill="#000" stroke="#fff" stroke-width="3" stroke-linejoin="round" paint-order="stroke">Ev</text>
<text x="711.2" y="457.5" font-size="17" font-weight="bold" text-anchor="middle" fill="#000" stroke="#fff" stroke-width="3" stroke-linejoin="round" paint-order="stroke">Gksz</text>
<text x="778.6" y="461.8" font-size="17" font-weight="bold" text-anchor="middle" fill="#000" stroke="#fff" stroke-width="3" stroke-linejoin="round" paint-order="stroke">KÖu</text>
<text x="875.2" y="456.8" font-size="17" font-weight="bold" text-anchor="middle" fill="#000" stroke="#fff" stroke-width="3" stroke-linejoin="round" paint-order="stroke">K</text>
<text x="643.0" y="568.1" font-size="17" font-weight="bold" text-anchor="middle" fill="#000" stroke="#fff" stroke-width="3" stroke-linejoin="round" paint-order="stroke">Gksz</text>
<text x="499.5" y="576.4" font-size="17" font-weight="bold" text-anchor="middle" fill="#000" stroke="#fff" stroke-width="3" stroke-linejoin="round" paint-order="stroke">Eg</text>
<text x="917.3" y="544.8" font-size="17" font-weight="bold" text-anchor="middle" fill="#000" stroke="#fff" stroke-width="3" stroke-linejoin="round" paint-order="stroke">Zkp</text>
<text x="528.0" y="700.1" font-size="17" font-weight="bold" text-anchor="middle" fill="#000" stroke="#fff" stroke-width="3" stroke-linejoin="round" paint-order="stroke">KÖu</text>
<text x="453.7" y="729.7" font-size="17" font-weight="bold" text-anchor="middle" fill="#000" stroke="#fff" stroke-width="3" stroke-linejoin="round" paint-order="stroke">Eg</text>
<text x="787.2" y="723.4" font-size="17" font-weight="bold" text-anchor="middle" fill="#000" stroke="#fff" stroke-width="3" stroke-linejoin="round" paint-order="stroke">Gip</text>
<text x="908.0" y="576.1" font-size="17" font-weight="bold" text-anchor="middle" fill="#fff" stroke="#000" stroke-width="3" stroke-linejoin="round" paint-order="stroke">Vt</text>
<text x="650.5" y="648.0" font-size="9" text-anchor="middle" fill="#333">50</text>
<text x="677.0" y="684.0" font-size="9" text-anchor="middle" fill="#333">60</text>
<text x="876.0" y="664.0" font-size="9" text-anchor="middle" fill="#333">250</text>
<text x="814.0" y="786.0" font-size="9" text-anchor="middle" fill="#333">100</text>
<text x="931.0" y="384.0" font-size="6.500" fill="#ee1c24" transform="rotate(25 931.0 384.0)">R</text>
<text x="926.5" y="413.0" font-size="6.500" fill="#ee1c24" transform="rotate(-10 926.5 413.0)">R</text>
<text x="813.0" y="386.0" font-size="7" fill="#2a9a3a" transform="rotate(-20 813.0 386.0)">π</text>
<text x="843.0" y="375.0" font-size="7" fill="#2a9a3a" transform="rotate(10 843.0 375.0)">π</text>
<text x="872.0" y="383.0" font-size="7" fill="#2a9a3a" transform="rotate(20 872.0 383.0)">π</text>
<text x="826.0" y="410.0" font-size="7" fill="#2a9a3a" transform="rotate(50 826.0 410.0)">π</text>
<text x="848.0" y="433.0" font-size="7" fill="#2a9a3a" transform="rotate(40 848.0 433.0)">π</text>
<text x="883.0" y="474.0" font-size="7" fill="#2a9a3a" transform="rotate(70 883.0 474.0)">π</text>
</g></svg>
<!--MAP-END-->
<!--TASKBAR-START-->
<div class="abs" style="left:353px;top:832px;width:39px;height:32px;background:#404f58"></div>
<svg class="abs" style="left:0;top:0" width="1536" height="864" viewBox="0 0 1536 864" fill="none">
<!-- underlines -->
<g fill="#8cbbe8"><rect x="82.700" y="861.600" width="32" height="2.400"/><rect x="200.200" y="861.600" width="32" height="2.400"/><rect x="239.300" y="861.600" width="31.200" height="2.400"/><rect x="278.300" y="861.600" width="32" height="2.400"/><rect x="318" y="861.600" width="30.600" height="2.400"/><rect x="353" y="861.600" width="39" height="2.400"/></g>
<!-- windows logo -->
<g fill="#fff"><path d="M12.500 843.200l5.600-.9v5.400h-5.600z M18.900 842.200l7.100-1.100v6.600h-7.100z M12.500 848.500h5.600v5.400l-5.600-.9z M18.900 848.500h7.100v6.600l-7.100-1.100z"/></g>
<!-- task view -->
<g stroke="#fff" stroke-width="1.200"><rect x="53.500" y="844.500" width="6.500" height="6.500"/><path d="M51.500 842.200h9 M51.500 853.400h9 M62.700 841.500v13"/></g><rect x="61.800" y="845" width="1.900" height="2" fill="#fff"/>
<!-- explorer -->
<path d="M89.800 842.300a1 1 0 0 1 1-1h5.200l1.500 1.700h9a1 1 0 0 1 1 1v10.400a1 1 0 0 1-1 1h-15.700a1 1 0 0 1-1-1z" fill="#f6c445"/>
<path d="M89.800 845h17.700v9.400a1 1 0 0 1-1 1h-15.700a1 1 0 0 1-1-1z" fill="#fddc6c"/>
<path d="M92.800 849h11.600v6.400h-11.600z" fill="#3f8fd6"/><rect x="96" y="852" width="5.200" height="3.400" fill="#fddc6c"/>
<!-- calculator -->
<rect x="130.600" y="838.500" width="14.200" height="18.800" rx="1" fill="#74828e"/>
<rect x="132" y="840.200" width="11.400" height="3.600" fill="#3dc3ee"/>
<g fill="#e3e9ee"><rect x="132" y="845.300" width="3.100" height="3"/><rect x="136.100" y="845.300" width="3.100" height="3"/><rect x="140.200" y="845.300" width="3.200" height="3"/><rect x="132" y="849.300" width="3.100" height="3"/><rect x="136.100" y="849.300" width="3.100" height="3"/><rect x="132" y="853.300" width="3.100" height="3"/><rect x="136.100" y="853.300" width="3.100" height="3"/></g>
<rect x="140.200" y="849.300" width="3.200" height="7" fill="#1b3f86"/>
<!-- firefox -->
<circle cx="176.500" cy="848.500" r="9" fill="#ff9a1a"/>
<path d="M168 846c0-4 4-8 9-7.500-1.500 1-2 2.500-1.500 4 3 0 5 2 5 5a5 5 0 0 1-10 0c-1 0-2-.5-2.500-1.500z" fill="#ff3d3d"/>
<circle cx="176.300" cy="848.800" r="4" fill="#7a3fd6"/>
<path d="M177 838c3 1 6.500 3.500 7.500 7l-3-1c-1-2.500-2.500-4-4.500-6z" fill="#ffd43a"/>
<path d="M167.500 850a9 9 0 0 0 17.900 0 8 8 0 0 1-15.400 2z" fill="#ff5a1f"/>
<!-- chrome -->
<circle cx="216" cy="848" r="9.300" fill="#fff"/>
<path d="M216 848L207.950 843.350A9.300 9.300 0 0 1 224.050 843.350z" fill="#e94435"/>
<path d="M216 838.700a9.300 9.300 0 0 1 8.050 4.650H216z" fill="#e94435"/>
<path d="M224.050 843.350A9.300 9.300 0 0 1 216 857.300L216 848z" fill="#fbc116"/>
<path d="M216 857.300A9.300 9.300 0 0 1 207.950 843.350L216 848z" fill="#2da94f"/>
<path d="M216 848L224.050 843.350 216 857.300z" fill="#fbc116"/>
<circle cx="216" cy="848" r="4.300" fill="#fff"/><circle cx="216" cy="848" r="3.400" fill="#4285f4"/>
<!-- outlook -->
<rect x="252" y="839" width="12.500" height="13" rx="1" fill="#1a8de0"/><rect x="258.300" y="839" width="6.200" height="4.300" fill="#50c3f5"/><rect x="252" y="843.300" width="6.300" height="4.300" fill="#0f6cbd"/>
<path d="M251 850l13.700-3.500v8.500a1 1 0 0 1-1 1h-11.700a1 1 0 0 1-1-1z" fill="#1a9ee8"/>
<rect x="245.800" y="842.500" width="9.500" height="9.500" rx="1" fill="#0f64b4"/>
<circle cx="250.500" cy="847.200" r="2.500" stroke="#fff" stroke-width="1.400"/>
<!-- word -->
<rect x="289" y="839" width="14.700" height="17" rx="1" fill="#2b7cd3"/><rect x="289" y="839" width="14.700" height="4.300" fill="#41a5ee"/><rect x="289" y="847.500" width="14.700" height="4.300" fill="#185abd"/><rect x="289" y="851.800" width="14.700" height="4.200" fill="#103f91"/>
<rect x="284.200" y="842.500" width="9.500" height="9.500" rx="1" fill="#185abd"/>
<path d="M286 844.800l1.300 5 1.600-5 1.600 5 1.300-5" stroke="#fff" stroke-width="1.100" stroke-linejoin="round"/>
<!-- excel -->
<rect x="328.500" y="839" width="14.300" height="17" rx="1" fill="#21a366"/><rect x="335.600" y="839" width="7.200" height="4.300" fill="#33c481"/><rect x="328.500" y="847.500" width="7.100" height="4.300" fill="#107c41"/><rect x="328.500" y="851.800" width="14.300" height="4.200" fill="#185c37"/>
<rect x="323.900" y="842.500" width="9.500" height="9.500" rx="1" fill="#107c41"/>
<path d="M326.500 844.800l4.300 5 M330.800 844.800l-4.300 5" stroke="#fff" stroke-width="1.200"/>
<!-- acrobat -->
<rect x="364.300" y="839.400" width="16.200" height="16" rx="2" fill="#c2111a"/>
<path d="M367.500 852.500c2.300-1.600 4-5 4.400-8.300.1-1.300-1.200-1.300-1.100 0 .4 3.200 3 6 6 6.500 1.200.1 1.200-1.100 0-1-3 .3-6.500 1.400-9.300 2.800z" stroke="#fff" stroke-width="1.300" stroke-linejoin="round"/>
<!-- tray -->
<path d="M1361.800 850.300l4.500-4.500 4.500 4.500" stroke="#fff" stroke-width="1.200"/>
<rect x="1379.600" y="841.700" width="11.100" height="11.500" rx="3.500" fill="#1fb5a8" stroke="#e8f6f4" stroke-width="1"/>
<g stroke="#fff" stroke-width="1"><rect x="1401" y="843.500" width="10" height="7"/><path d="M1398 843.500h5v3.500h-5z M1404 853.500h5 M1406.500 850.500v3" /></g>
<path d="M1417.300 846.200h2.200l3-2.700v9.400l-3-2.700h-2.200z" stroke="#fff" stroke-width="1"/><path d="M1424.800 845.500a3.500 3.500 0 0 1 0 5.500" stroke="#fff" stroke-width="0.900"/><path d="M1426.800 843.800a6 6 0 0 1 0 9" stroke="#8a97a0" stroke-width="0.900"/>
<path d="M1503.500 842h12v8h-8.500l-3.500 2.500z" fill="#fff"/><path d="M1505.500 844.300h8 M1505.500 846h8 M1505.500 847.700h8" stroke="#25373f" stroke-width="0.700"/>
<circle cx="1515.700" cy="853.400" r="5.600" fill="#25373f" stroke="#cfd6da" stroke-width="0.900"/>
<path d="M1532.500 832v32" stroke="#5a6872" stroke-width="1"/>
</svg>
<span class="t" style="left:1382.500px;top:842.500px;font-size:9.500px;font-weight:bold;color:#fff">e</span>
<span class="t" id="time" style="letter-spacing:-0.363px;;;left:1453.8px;top:836px;font-size:8.800px;color:#fff">10:36</span>
<span class="t" id="date" style="letter-spacing:-0.188px;;;left:1438.2px;top:850px;font-size:9px;color:#fff">2022. 09. 19.</span>
<span class="t" style="left:1513.600px;top:849.200px;font-size:8.500px;color:#fff">1</span>
<div class="abs" style="left:294px;top:101px;width:729px;height:8px;overflow:hidden"><span class="t" id="dh0" style="letter-spacing:-0.153px;;left:88px;top:-6.200px;font-size:10px;color:#333">GÖDÖLLŐ VÁROS TELEPÜLÉSRENDEZÉSI ESZKÖZEINEK MÓDOSÍTÁSA</span></div>
<span class="t" id="dh1" style="letter-spacing:-0.081px;;;left:382px;top:137.100px;font-size:11px;font-weight:bold;color:#1a1a1a;white-space:pre">1. melléklet   a .../2022. (......) határozathoz: Településszerkezeti terv módosítása</span>
<!--TASKBAR-END-->
</body>
</html>
